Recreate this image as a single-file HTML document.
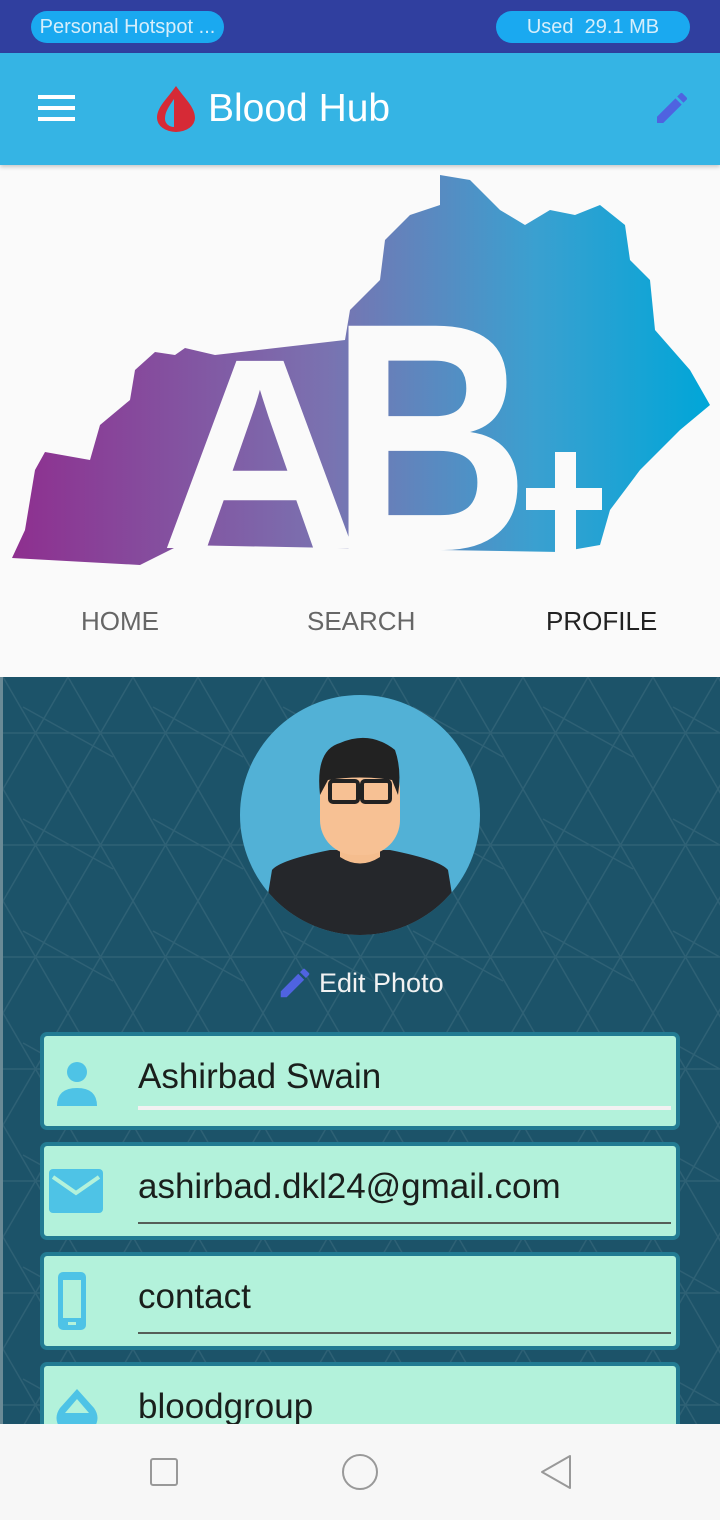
<!DOCTYPE html>
<html><head><meta charset="utf-8"><style>
*{margin:0;padding:0;box-sizing:border-box}
body{width:720px;height:1520px;overflow:hidden;font-family:"Liberation Sans",sans-serif;background:#fafafa;position:relative}
.abs{position:absolute}
.pill{position:absolute;top:11px;height:32px;border-radius:16px;background:#1aa9f0;color:#d6eefb;font-size:20px;line-height:32px;text-align:center}
.card{position:absolute;left:40px;width:640px;height:98px;background:#b3f2db;border:4px solid #227b92;border-radius:7px;overflow:hidden}
.card .t{position:absolute;left:94px;top:21px;font-size:35px;color:#1a1f1c}
.card .u{position:absolute;left:94px;right:5px;top:76px;height:2px;background:#555f58}
.card svg{position:absolute}
.tab{position:absolute;top:606px;font-size:26px;color:#666}
</style></head><body>
<div class="abs" style="left:0;top:0;width:720px;height:53px;background:#303f9f"></div>
<div class="pill" style="left:31px;width:193px;">Personal Hotspot ...</div>
<div class="pill" style="left:496px;width:194px;">Used&nbsp; 29.1 MB</div>
<div class="abs" style="left:0;top:53px;width:720px;height:112px;background:#35b4e4;box-shadow:0 2px 4px rgba(0,0,0,.2)"></div>
<div class="abs" style="left:38px;top:95px;width:37px;height:4px;background:#fff;box-shadow:0 11px 0 #fff,0 22px 0 #fff"></div>
<svg class="abs" style="left:155px;top:85px" width="42" height="48" viewBox="0 0 42 48"><path d="M21 1 C12 14 2 22 2 33 a19 14 0 0 0 38 0 C40 22 30 14 21 1Z" fill="#d62a36"/><path d="M19 14 C12 24 10 28 10 34 a9 8 0 0 0 9 8Z" fill="#35b4e4"/></svg>
<div class="abs" style="left:208px;top:87px;font-size:39px;color:#fff">Blood Hub</div>
<svg class="abs" style="left:652px;top:88px" width="40" height="40" viewBox="0 0 24 24"><path d="M3 17.25V21h3.75L17.81 9.94l-3.75-3.75L3 17.25zM20.71 7.04a1 1 0 000-1.41l-2.34-2.34a1 1 0 00-1.41 0l-1.83 1.83 3.75 3.75 1.83-1.83z" fill="#4f63e0"/></svg>
<svg class="abs" style="left:0;top:165px" width="720" height="420" viewBox="0 165 720 420">
<defs><linearGradient id="g" x1="0" x2="1"><stop offset="0" stop-color="#8e2f8f"/><stop offset=".45" stop-color="#7a72b0"/><stop offset=".75" stop-color="#3aa0d0"/><stop offset="1" stop-color="#00a6d8"/></linearGradient></defs>
<path fill="url(#g)" d="M12 558 L25 530 L35 470 L45 452 L90 460 L100 425 L130 400 L135 370 L155 352 L175 355 L185 348 L215 355 L345 340 L350 310 L380 280 L385 240 L410 215 L440 205 L440 175 L470 180 L500 210 L525 225 L550 210 L575 215 L600 205 L625 225 L630 260 L650 280 L655 330 L690 370 L710 405 L680 430 L640 470 L610 510 L600 545 L560 552 L440 550 L180 545 L140 565 Z"/>
<g fill="#fafafa" font-family="Liberation Sans" font-weight="bold">
<text x="160" y="548" font-size="272" textLength="200" lengthAdjust="spacingAndGlyphs">A</text>
<text x="330" y="550" font-size="326" textLength="200" lengthAdjust="spacingAndGlyphs">B</text>
<rect x="526" y="488" width="76" height="22"/><rect x="555" y="452" width="21" height="100"/>
</g></svg>
<div class="tab" style="left:81px">HOME</div>
<div class="tab" style="left:307px">SEARCH</div>
<div class="tab" style="left:546px;color:#222">PROFILE</div>
<div class="abs" style="left:0;top:677px;width:720px;height:748px;background:#1c5369;border-left:3px solid #6a8a96;overflow:hidden">
<svg width="720" height="748" style="opacity:.08"><defs><pattern id="p" width="130" height="112" patternUnits="userSpaceOnUse"><path d="M0 0L65 112L130 0M0 112L65 0L130 112M0 56H130M20 30L110 80" stroke="#fff" stroke-width="1.5" fill="none"/></pattern></defs><rect width="720" height="748" fill="url(#p)"/></svg>
</div>
<svg class="abs" style="left:240px;top:695px" width="240" height="240" viewBox="0 0 240 240">
<defs><clipPath id="c"><circle cx="120" cy="120" r="120"/></clipPath></defs>
<circle cx="120" cy="120" r="120" fill="#52b1d6"/>
<g clip-path="url(#c)">
<path d="M32 175 Q40 165 90 155 L150 155 Q200 165 208 175 L222 260 L18 260Z" fill="#25272b"/>
<path d="M100 135 L100 162 Q120 175 140 162 L140 135Z" fill="#f5bd8e"/>
<rect x="80" y="60" width="80" height="100" rx="35" fill="#f7c194"/>
<path d="M80 100 Q75 55 100 48 Q130 35 155 55 Q162 75 158 100 L152 85 Q120 80 88 85Z" fill="#222"/>
<rect x="90" y="86" width="28" height="21" rx="3" fill="none" stroke="#222" stroke-width="4"/><rect x="122" y="86" width="28" height="21" rx="3" fill="none" stroke="#222" stroke-width="4"/>
</g></svg>
<svg class="abs" style="left:276px;top:964px" width="38" height="38" viewBox="0 0 24 24"><path d="M3 17.25V21h3.75L17.81 9.94l-3.75-3.75L3 17.25zM20.71 7.04a1 1 0 000-1.41l-2.34-2.34a1 1 0 00-1.41 0l-1.83 1.83 3.75 3.75 1.83-1.83z" fill="#4f63e0"/></svg>
<div class="abs" style="left:319px;top:968px;font-size:27px;color:#f2f2f2">Edit Photo</div>
<div class="card" style="top:1032px"><svg style="left:10px;top:24px" width="46" height="46" viewBox="0 0 46 46"><circle cx="23" cy="12" r="10" fill="#4ec3e6"/><path d="M3 46 Q3 28 23 28 Q43 28 43 46Z" fill="#4ec3e6"/></svg><div class="t">Ashirbad Swain</div><div class="u" style="background:#f2f2f2;height:4px;top:70px"></div></div>
<div class="card" style="top:1142px"><svg style="left:5px;top:23px" width="54" height="46" viewBox="0 0 54 46"><rect width="54" height="44" rx="4" fill="#4ec3e6"/><path d="M4 8 L27 24 L50 8" stroke="#b3f2db" stroke-width="4" fill="none"/></svg><div class="t">ashirbad.dkl24@gmail.com</div><div class="u"></div></div>
<div class="card" style="top:1252px"><svg style="left:12px;top:16px" width="40" height="60" viewBox="0 0 40 60"><rect width="28" height="58" x="2" rx="5" fill="#4ec3e6"/><rect x="7" y="8" width="18" height="38" fill="#b3f2db"/><rect x="12" y="50" width="8" height="3" fill="#b3f2db"/></svg><div class="t">contact</div><div class="u"></div></div>
<div class="card" style="top:1362px;height:80px"><svg style="left:10px;top:20px" width="46" height="60" viewBox="0 0 46 60"><path d="M23 3 L40 22 Q47 32 40 42 Q23 56 6 42 Q-1 32 6 22Z" fill="#4ec3e6"/><path d="M23 13 L35 27 L11 27Z" fill="#b3f2db"/></svg><div class="t">bloodgroup</div></div>
<div class="abs" style="left:0;top:1424px;width:720px;height:96px;background:#f7f7f7"></div>
<div class="abs" style="left:150px;top:1458px;width:28px;height:28px;border:2px solid #999;border-radius:3px"></div>
<div class="abs" style="left:342px;top:1454px;width:36px;height:36px;border:2px solid #999;border-radius:50%"></div>
<svg class="abs" style="left:538px;top:1454px" width="36" height="36"><path d="M32 2 L32 34 L4 18Z" fill="none" stroke="#999" stroke-width="2" stroke-linejoin="round"/></svg>
</body></html>
